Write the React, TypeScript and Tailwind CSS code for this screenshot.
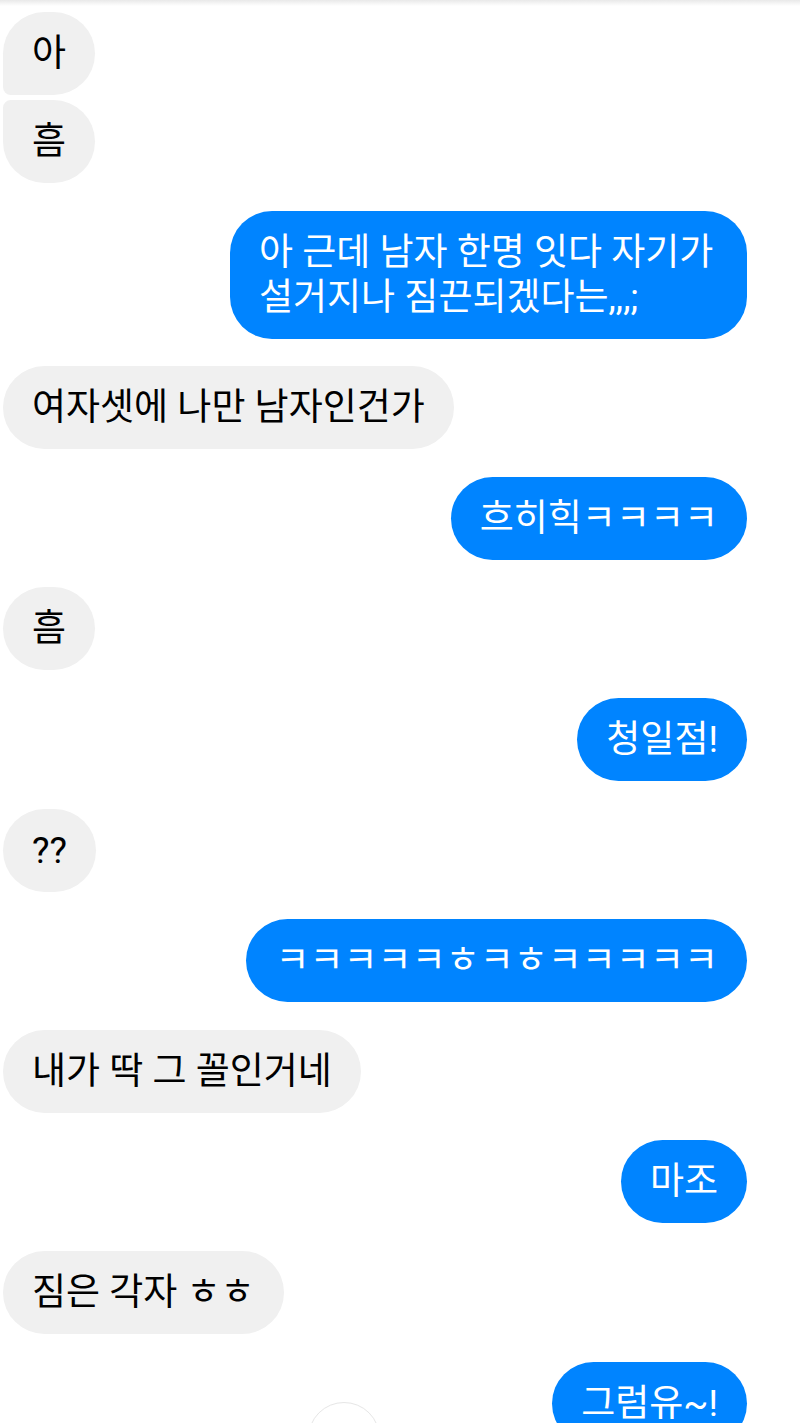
import React from "react";

type Msg = { text: string; me: boolean; cls?: string };

const msgs: Msg[] = [
  { text: "아", me: false, cls: "rounded-bl-[8px]" },
  { text: "흠", me: false, cls: "rounded-tl-[8px] mt-[5px]" },
  { text: "아 근데 남자 한명 잇다 자기가 설거지나 짐끈되겠다는,,,;", me: true },
  { text: "여자셋에 나만 남자인건가", me: false },
  { text: "흐히힉ㅋㅋㅋㅋ", me: true },
  { text: "흠", me: false },
  { text: "청일점!", me: true },
  { text: "??", me: false },
  { text: "ㅋㅋㅋㅋㅋㅎㅋㅎㅋㅋㅋㅋㅋ", me: true },
  { text: "내가 딱 그 꼴인거네", me: false },
  { text: "마조", me: true },
  { text: "짐은 각자 ㅎㅎ", me: false },
  { text: "그럼유~!", me: true },
];

export default function App() {
  return (
    <div className="relative h-[1423px] w-[800px] overflow-hidden bg-white font-[Roboto,'Noto_Sans_CJK_KR',sans-serif]">
      <div className="h-[6px] bg-gradient-to-b from-[#e9e9e9] to-white" />
      <div className="flex flex-col pl-[3px] pr-[53px] pt-[6px]">
        {msgs.map((m, i) => {
          const gap = i === 0 || i === 1 ? "" : "mt-[27.6px]";
          return (
            <div
              key={i}
              className={`flex ${m.me ? "justify-end" : "justify-start"} ${gap}`}
            >
              <div
                className={`max-w-[517px] min-w-[88px] break-keep rounded-[42px] px-[29px] py-[19px] text-[37px] leading-[45px] ${
                  m.me ? "bg-[#0084ff] text-white text-left" : "bg-[#f0f0f0] text-black text-center"
                } ${m.cls ?? ""}`}
              >
                {m.text}
              </div>
            </div>
          );
        })}
      </div>
      <div className="absolute left-[308px] top-[1402px] h-[72px] w-[72px] rounded-full border border-[#e6e6e6] bg-white" />
    </div>
  );
}
